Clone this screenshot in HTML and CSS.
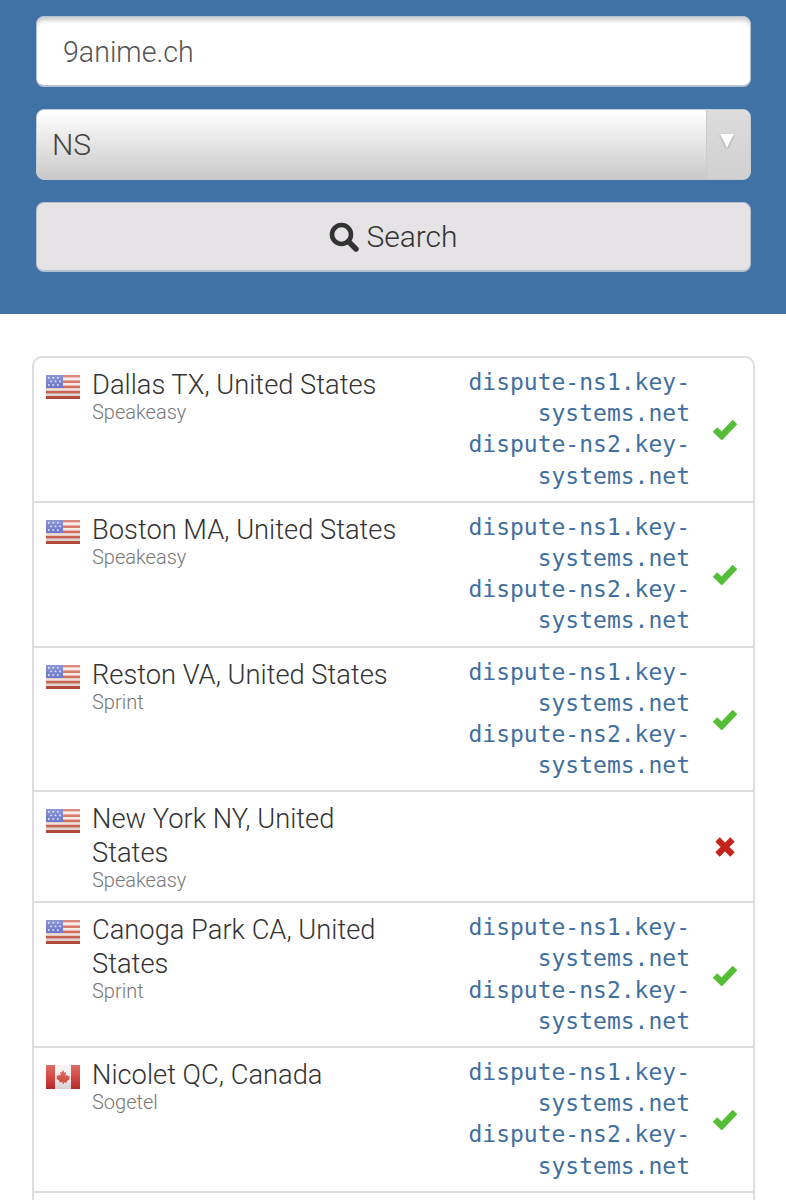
FILE: index.html
```html
<!DOCTYPE html>
<html lang="en">

<head>
    <meta charset="UTF-8">
    <title>DNS Propagation Check</title>
    <link rel="stylesheet" href="styles.css">
</head>

<body>

<svg class="defs" width="0" height="0">
    <defs>
        <linearGradient id="gloss" x1="0" y1="0" x2="0" y2="1">
            <stop offset="0" stop-color="#fff" stop-opacity="0.3"/>
            <stop offset="0.5" stop-color="#fff" stop-opacity="0.12"/>
            <stop offset="1" stop-color="#000" stop-opacity="0.14"/>
        </linearGradient>
        <symbol id="flag-us" viewBox="0 0 34 24">
            <rect width="34" height="24" fill="#f4e6e2"/>
            <rect y="0" width="34" height="2.4" fill="#cd5a48"/>
            <rect y="5.4" width="34" height="2.6" fill="#cd5a48"/>
            <rect y="10.6" width="34" height="2.6" fill="#cd5a48"/>
            <rect y="15.8" width="34" height="2.6" fill="#cd5a48"/>
            <rect y="21" width="34" height="3" fill="#c9503f"/>
            <rect width="17" height="13" fill="#5b68c4"/>
            <g fill="#e4e6f6">
                <rect x="2" y="2" width="1.6" height="1.6"/><rect x="6.5" y="2" width="1.6" height="1.6"/><rect x="11" y="2" width="1.6" height="1.6"/>
                <rect x="4.2" y="5.6" width="1.6" height="1.6"/><rect x="8.7" y="5.6" width="1.6" height="1.6"/><rect x="13.2" y="5.6" width="1.6" height="1.6"/>
                <rect x="2" y="9.2" width="1.6" height="1.6"/><rect x="6.5" y="9.2" width="1.6" height="1.6"/><rect x="11" y="9.2" width="1.6" height="1.6"/>
            </g>
            <rect width="34" height="24" fill="url(#gloss)"/>
        </symbol>
        <symbol id="flag-ca" viewBox="0 0 34 24">
            <rect width="34" height="24" fill="#f5eeee"/>
            <rect width="9" height="24" fill="#cf2f2b"/>
            <rect x="25" width="9" height="24" fill="#cf2f2b"/>
            <path d="M17 5l1.5 2.8 1.6-.7-.6 3.8 1.9-1.1.6 1.5 1.9-.3-.7 2.2.8.6-3.4 2.6.4 1.4-3.3-.5V19h-1.2v-2.1l-3.3.5.4-1.4-3.4-2.6.8-.6-.7-2.2 1.9.3.6-1.5 1.9 1.1-.6-3.8 1.6.7z" fill="#d2443a"/>
            <rect width="34" height="24" fill="url(#gloss)"/>
        </symbol>
        <symbol id="ok" viewBox="0 0 26 22">
            <path d="M3 11.5l6.7 6.5L23 4" fill="none" stroke="#56bd38" stroke-width="6.4"/>
        </symbol>
        <symbol id="fail" viewBox="0 0 22 22">
            <path d="M3.5 3.5l15 15M18.5 3.5l-15 15" fill="none" stroke="#c4241c" stroke-width="6.2"/>
        </symbol>
    </defs>
</svg>

<div class="page">

    <!-- Formulario -->
    <div class="search-panel">
        <input class="field" type="text" value="9anime.ch">
        <div class="select-box">
            <span class="select-value">NS</span>
            <span class="select-arrow"></span>
        </div>
        <button class="search-btn" type="button">
            <svg class="search-icon" viewBox="0 0 30 30">
                <circle cx="12.5" cy="12.5" r="9.5" fill="none" stroke="#333" stroke-width="4.6"/>
                <path d="M19.5 19.5l7.5 7.5" stroke="#333" stroke-width="5.4" stroke-linecap="round"/>
            </svg>
            Search
        </button>
    </div>

    <!-- Resultados -->
    <div class="results">
        <div class="results-table">

            <div class="row">
                <svg class="flag"><use href="#flag-us"/></svg>
                <div class="place">
                    <div class="city">Dallas TX, United States</div>
                    <div class="isp">Speakeasy</div>
                </div>
                <div class="records">dispute-ns1.key-systems.net dispute-ns2.key-systems.net</div>
                <svg class="status"><use href="#ok"/></svg>
            </div>

            <div class="row">
                <svg class="flag"><use href="#flag-us"/></svg>
                <div class="place">
                    <div class="city">Boston MA, United States</div>
                    <div class="isp">Speakeasy</div>
                </div>
                <div class="records">dispute-ns1.key-systems.net dispute-ns2.key-systems.net</div>
                <svg class="status"><use href="#ok"/></svg>
            </div>

            <div class="row">
                <svg class="flag"><use href="#flag-us"/></svg>
                <div class="place">
                    <div class="city">Reston VA, United States</div>
                    <div class="isp">Sprint</div>
                </div>
                <div class="records">dispute-ns1.key-systems.net dispute-ns2.key-systems.net</div>
                <svg class="status"><use href="#ok"/></svg>
            </div>

            <div class="row">
                <svg class="flag"><use href="#flag-us"/></svg>
                <div class="place">
                    <div class="city">New York NY, United States</div>
                    <div class="isp">Speakeasy</div>
                </div>
                <div class="records"></div>
                <svg class="status status-fail"><use href="#fail"/></svg>
            </div>

            <div class="row">
                <svg class="flag"><use href="#flag-us"/></svg>
                <div class="place">
                    <div class="city">Canoga Park CA, United States</div>
                    <div class="isp">Sprint</div>
                </div>
                <div class="records">dispute-ns1.key-systems.net dispute-ns2.key-systems.net</div>
                <svg class="status"><use href="#ok"/></svg>
            </div>

            <div class="row">
                <svg class="flag"><use href="#flag-ca"/></svg>
                <div class="place">
                    <div class="city">Nicolet QC, Canada</div>
                    <div class="isp">Sogetel</div>
                </div>
                <div class="records">dispute-ns1.key-systems.net dispute-ns2.key-systems.net</div>
                <svg class="status"><use href="#ok"/></svg>
            </div>

            <div class="row row-cut"></div>
        </div>
    </div>
</div>

</body>

</html>
```

FILE: styles.css
```css
* {
    box-sizing: border-box;
    font-family: 'Roboto', 'Liberation Sans', sans-serif;
}

html,
body {
    margin: 0;
    padding: 0;
    background-color: #ffffff;
}

.defs {
    display: block;
    height: 0;
}

.page {
    height: 1200px;
    overflow: hidden;
}

/* FORMULARIO */
.search-panel {
    height: 314px;
    padding: 16px 35px 0 36px;
    background-color: #4072a5;
    display: flex;
    flex-direction: column;
    gap: 22px;
}

.field {
    width: 100%;
    height: 71px;
    padding: 2px 26px 0;
    border: 1px solid #b4c2d2;
    border-bottom-width: 2px;
    border-radius: 8px;
    background-color: #ffffff;
    box-shadow: inset 0 5px 4px -2px #c8c8c8;
    font-size: 28.6px;
    font-weight: 300;
    color: #555555;
    outline: none;
}

.select-box {
    height: 71px;
    display: flex;
    border-radius: 8px;
    border: 1px solid #c3cbd4;
    background: linear-gradient(#ffffff 4%, #f4f4f4 22%, #c9c9c9 100%);
    overflow: hidden;
}

.select-value {
    flex: 1;
    padding-left: 15px;
    line-height: 69px;
    font-size: 30px;
    font-weight: 300;
    color: #444444;
}

.select-arrow {
    width: 44px;
    background: linear-gradient(#dddcdc, #d0d0d0);
    border-left: 1px solid #cbcbcb;
    position: relative;
}

.select-arrow::after {
    content: "";
    position: absolute;
    top: 24px;
    left: 13px;
    border-left: 7px solid transparent;
    border-right: 7px solid transparent;
    border-top: 14px solid #ffffff;
    filter: drop-shadow(0 1px 1px #9a9a9a);
}

.search-btn {
    height: 70px;
    display: flex;
    align-items: center;
    justify-content: center;
    gap: 7px;
    border: 1px solid #b4c0cc;
    border-bottom-width: 2px;
    border-radius: 8px;
    background-color: #e5e3e5;
    font-size: 30px;
    font-weight: 300;
    color: #333333;
}

.search-icon {
    width: 30px;
    height: 30px;
}

/* RESULTADOS */
.results {
    padding: 42px 31px 0 32px;
}

.results-table {
    border: 2px solid #dddddd;
    border-radius: 10px;
}

.row {
    display: flex;
    align-items: stretch;
    padding: 9px 0 9px 12px;
    border-bottom: 2px solid #dddddd;
}

.row-cut {
    height: 40px;
    border-bottom: none;
}

.flag {
    flex: none;
    width: 34px;
    height: 24px;
    margin-top: 8px;
}

.place {
    width: 352px;
    padding-right: 30px;
    margin-left: 12px;
    flex: none;
}

.city {
    margin-top: 2px;
    font-size: 27.3px;
    font-weight: 300;
    line-height: 33.4px;
    color: #333333;
}

.isp {
    margin-top: -2px;
    font-size: 20px;
    font-weight: 300;
    line-height: 24px;
    color: #777777;
}

.records {
    width: 246px;
    flex: none;
    font-family: 'DejaVu Sans Mono', monospace;
    font-size: 23px;
    line-height: 31.2px;
    text-align: right;
    color: #3f6f9f;
}

.status {
    flex: none;
    width: 26px;
    height: 22px;
    margin: auto 0 auto 22px;
}

.status-fail {
    width: 22px;
    margin-left: 24px;
}
```
